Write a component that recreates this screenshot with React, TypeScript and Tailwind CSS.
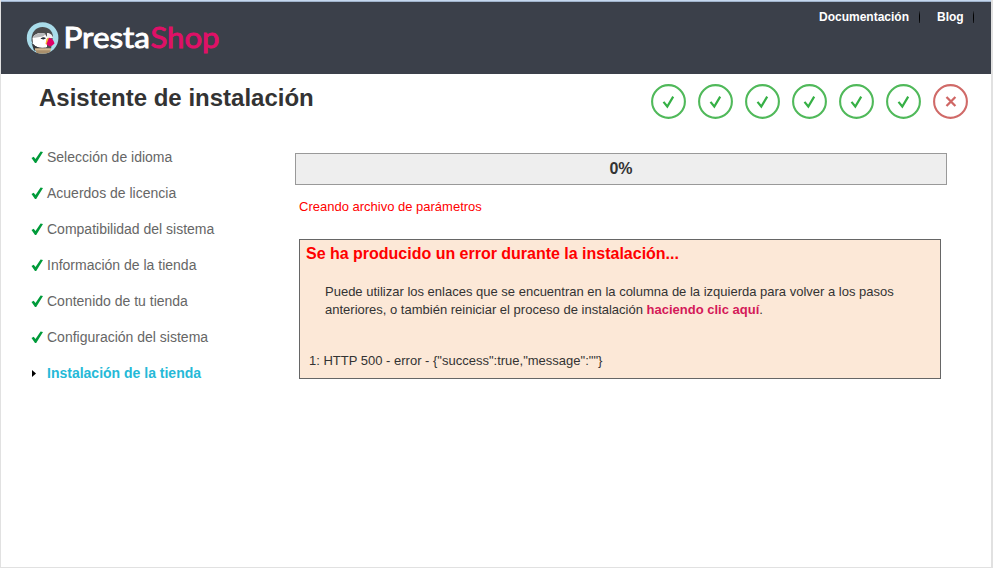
const doneSteps = [
  'Selección de idioma',
  'Acuerdos de licencia',
  'Compatibilidad del sistema',
  'Información de la tienda',
  'Contenido de tu tienda',
  'Configuración del sistema',
];

function Logo() {
  return (
    <svg className="block" width="200" height="40" viewBox="24 18 200 40" role="img" aria-label="PrestaShop">
      <defs>
        <clipPath id="badge">
          <circle cx="42.6" cy="38" r="15.800" />
        </clipPath>
      </defs>
      <circle cx="42.6" cy="38" r="15.800" fill="#a9dcea" />
      <g clipPath="url(#badge)">
        <path d="M31.500 41C31 32 36 27 42.500 27 48.500 27 52 30.500 53 36L51 49H35z" fill="#4b4c4e" />
        <path d="M32.500 38c2-4.500 7-6 12-4.500l2.500 3.500v10l-3 1c-5 .5-9-1.500-11-4.500z" fill="#fff" />
        <path d="M33 38c1.500-4.500 8-6.500 13-4l-3 2.500-5 .7z" fill="#b7b8ba" />
        <path d="M40.500 38.800c1.500-1.800 4-2 5.500-.6l-2.500 1.200z" fill="#252b35" />
        <path d="M31.500 43c3 4 8 5.300 13 4.500l2 3H34z" fill="#35363a" />
        <path d="M47 33c3 0 5.500 1.500 6 5l-6 .8z" fill="#eeeef0" />
        <path d="M46.500 39l2.500-1.500-1.500 7.500-2-1z" fill="#f6b52b" />
        <path d="M49 37.800c3 .2 5 3.200 5.500 5.700-1.500 1.500-3 2.500-4.500 3-1.500-.8-3-1.500-3.500-2.500z" fill="#df0067" />
        <path d="M36 49h14.500v6H36z" fill="#a98f6c" />
        <path d="M35 48.300h16v1.900H35z" fill="#d2b890" />
      </g>
      <text x="63.500" y="47.500" fontSize="28" className="font-[Lato,sans-serif] font-normal" fill="#fff" stroke="#fff" strokeWidth="0.900" textLength="86.500" lengthAdjust="spacingAndGlyphs">Presta</text>
      <text x="150.500" y="47.500" fontSize="28" className="font-[Lato,sans-serif] font-normal" fill="#df1067" stroke="#df1067" strokeWidth="0.900" textLength="69" lengthAdjust="spacingAndGlyphs">Shop</text>
    </svg>
  );
}

function StepCircle({ failed = false }: { failed?: boolean }) {
  return (
    <svg className="block" width="35" height="35" viewBox="0 0 35 35" fill="none">
      <circle cx="17.500" cy="17.500" r="16.400" stroke={failed ? '#d06a68' : '#50b95a'} strokeWidth="2.100" />
      {failed ? (
        <path d="M13.500 13l8.900 9M22.400 13l-8.900 9" stroke="#cf6664" strokeWidth="2.300" />
      ) : (
        <path d="M12.500 17.900l3.800 4.600 5.900-9.900" stroke="#35b045" strokeWidth="2.200" />
      )}
    </svg>
  );
}

function Tick() {
  return (
    <svg className="block" width="12" height="13" viewBox="0 0 12 13">
      <path d="M0.500 6.900l2.200-1.200 1.800 2.400L9.600 0.500 12 0.900 5.200 12H4z" fill="#009b3a" />
    </svg>
  );
}

export default function App() {
  return (
    <div className="flex h-[568px] w-[993px] flex-col overflow-hidden border-r-2 border-b border-l border-[#e1e1e1] bg-white font-['Liberation_Sans',Arial,sans-serif] text-[#333]">
      <div className="h-px shrink-0 bg-[#c5d8ef]" />
      <div className="h-px shrink-0 bg-[#a0b3cc]" />
      <header className="flex h-[72px] shrink-0 justify-between bg-[#3b404a]">
        <div className="pt-4 pl-[23px]">
          <Logo />
        </div>
        <nav className="flex h-[30px] items-center pr-[17px] text-[12px] font-bold text-white">
          <a className="w-[91px]">Documentación</a>
          <span className="mr-[17px] ml-[9px] h-3 w-px bg-gradient-to-b from-[#33373f] via-black to-[#1b1d22]" />
          <a className="w-[27px]">Blog</a>
          <span className="ml-[9px] h-3 w-px bg-gradient-to-b from-[#33373f] via-black to-[#1b1d22]" />
        </nav>
      </header>
      <div className="flex h-[65px] justify-between pr-[23px] pl-[38px]">
        <h1 className="pt-[8px] text-[24px] leading-8 font-bold">Asistente de instalación</h1>
        <div className="flex gap-3 pt-[10px]">
          {[1, 2, 3, 4, 5, 6].map((n) => (
            <StepCircle key={n} />
          ))}
          <StepCircle failed />
        </div>
      </div>
      <div className="flex">
        <ul className="w-[294px] pl-[30px] text-[14px] text-[#666]">
          {doneSteps.map((label) => (
            <li key={label} className="flex h-9 items-center">
              <span className="w-4">
                <Tick />
              </span>
              {label}
            </li>
          ))}
          <li className="flex h-9 items-center font-bold text-[#25b9d7]">
            <span className="w-4 pl-px">
              <svg className="block" width="4" height="7" viewBox="0 0 4 7">
                <path d="M0 0l4 3.500L0 7z" fill="#000" />
              </svg>
            </span>
            Instalación de la tienda
          </li>
        </ul>
        <main className="pt-[14px] text-[13px]">
          <div className="flex h-8 w-[652px] items-center justify-center border border-[#999] bg-[#eee] text-[16px] font-bold">0%</div>
          <p className="mt-[13px] ml-1 leading-[18px] text-[#f00]">Creando archivo de parámetros</p>
          <section className="mt-[23px] ml-1 h-[140px] w-[642px] border border-[#666] bg-[#fce8d7]">
            <h2 className="pt-[4px] pl-[6px] text-[16px] leading-[20px] font-bold tracking-[-0.01px] text-[#f00]">Se ha producido un error durante la instalación...</h2>
            <p className="pt-[19px] pl-[25px] leading-[18px] whitespace-nowrap">
              Puede utilizar los enlaces que se encuentran en la columna de la izquierda para volver a los pasos
              <br />
              anteriores, o también reiniciar el proceso de instalación <a className="font-bold text-[#d41958]">haciendo clic aquí</a>.
            </p>
            <p className="pt-[33px] pl-[9px] leading-[18px]">{'1: HTTP 500 - error - {"success":true,"message":""}'}</p>
          </section>
        </main>
      </div>
    </div>
  );
}
